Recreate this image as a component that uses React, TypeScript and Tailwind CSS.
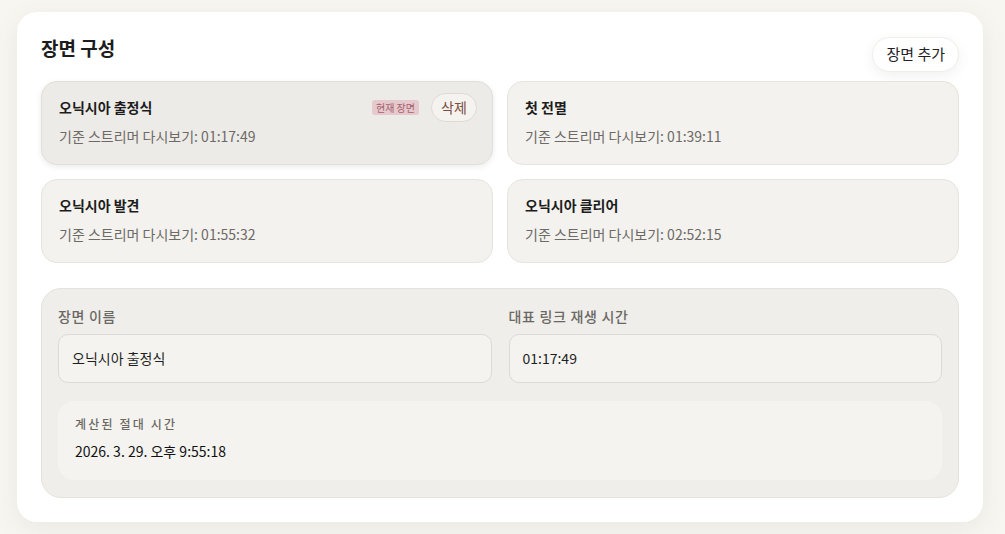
const font = { fontFamily: '"Noto Sans CJK KR", "Noto Sans", sans-serif' }

type Scene = { name: string; time: string }

const scenes: Scene[] = [
  { name: '오닉시아 출정식', time: '01:17:49' },
  { name: '첫 전멸', time: '01:39:11' },
  { name: '오닉시아 발견', time: '01:55:32' },
  { name: '오닉시아 클리어', time: '02:52:15' },
]

function SceneCard({ scene, active }: { scene: Scene; active: boolean }) {
  return (
    <div
      className={
        'h-[84px] rounded-[16px] border pl-[17px] pr-[15px] pt-[14px] ' +
        (active
          ? 'bg-[#edebe7] border-[#e2dfd9] shadow-[0_2px_6px_rgba(0,0,0,0.08)]'
          : 'bg-[#f3f2ee] border-[#e7e4de]')
      }
    >
      <div className="flex items-center justify-between h-[22px]">
        <span className="text-[14px] font-bold text-[#1d1d1d]">{scene.name}</span>
        {active && (
          <div className="flex items-center gap-[12px]">
            <span className="rounded-[3px] bg-[#e6c9cc] px-[4px] text-[10px] leading-[15px] text-[#a5616c]">
              현재 장면
            </span>
            <button className="h-[29px] w-[46px] rounded-full border border-[#e2d8d2] bg-[#f5f3ef] text-[14px] text-[#7b4e42]">
              삭제
            </button>
          </div>
        )}
      </div>
      <div className="mt-[8px] text-[14px] text-[#6d6a66]">기준 스트리머 다시보기: {scene.time}</div>
    </div>
  )
}

export default function App() {
  return (
    <div className="min-h-[534px] bg-[#f7f6f1] pt-[12px] pl-[17px]" style={font}>
      <div className="w-[966px] h-[510px] rounded-[20px] bg-white shadow-[0_6px_24px_rgba(120,110,90,0.10)] px-[24px] pt-[24px]">
        {/* Header */}
        <div className="flex items-start justify-between h-[45px]">
          <h2 className="text-[19px] font-bold text-[#1c1c1c] leading-[24px]">장면 구성</h2>
          <button className="mt-[1px] h-[35px] px-[13px] rounded-full bg-white border border-[#f0eee9] shadow-[0_4px_14px_rgba(0,0,0,0.06)] text-[15px] text-[#222]">
            장면 추가
          </button>
        </div>

        {/* Scene cards */}
        <div className="grid grid-cols-2 gap-[14px]">
          {scenes.map((s, i) => (
            <SceneCard key={s.name} scene={s} active={i === 0} />
          ))}
        </div>

        {/* Editor */}
        <div className="mt-[25px] rounded-[20px] border border-[#e4e2dc] bg-[#efeeea] px-[16px] pt-[17px] pb-[17px]">
          <div className="grid grid-cols-2 gap-[17px]">
            <div>
              <div className="text-[14px] font-medium tracking-[0.05em] text-[#6b6864] h-[20px] leading-[20px]">장면 이름</div>
              <div className="mt-[8px] h-[49px] rounded-[10px] border border-[#dcdad5] bg-[#f4f3ef] px-[13px] flex items-center text-[14px] text-[#1f1f1f]">
                오닉시아 출정식
              </div>
            </div>
            <div>
              <div className="text-[14px] font-medium tracking-[0.05em] text-[#6b6864] h-[20px] leading-[20px]">대표 링크 재생 시간</div>
              <div className="mt-[8px] h-[49px] rounded-[10px] border border-[#dcdad5] bg-[#f4f3ef] px-[13px] flex items-center text-[14px] text-[#1f1f1f]">
                01:17:49
              </div>
            </div>
          </div>
          <div className="mt-[18px] h-[79px] rounded-[16px] bg-[#f4f3ef] px-[17px] pt-[14px]">
            <div className="text-[12px] font-medium tracking-[0.18em] text-[#6b6864] leading-[18px]">계산된 절대 시간</div>
            <div className="mt-[8px] text-[14px] text-[#111]">2026. 3. 29. 오후 9:55:18</div>
          </div>
        </div>
      </div>
    </div>
  )
}
